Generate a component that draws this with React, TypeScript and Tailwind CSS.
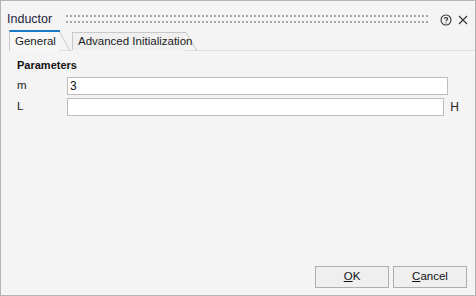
import type React from 'react';

const font = { fontFamily: '"Liberation Sans", Arial, sans-serif' };

const Grip: React.FC = () => (
  <svg width="364" height="9" className="shrink-0">
    <defs>
      <pattern id="grip" width="4" height="6" patternUnits="userSpaceOnUse">
        <rect x="0" y="0" width="2" height="2" fill="#a6a6a6" />
      </pattern>
    </defs>
    <rect x="0" y="0" width="364" height="9" fill="url(#grip)" />
  </svg>
);

const HelpIcon: React.FC = () => (
  <svg width="12" height="12" viewBox="0 0 12 12" fill="none" stroke="#333" strokeWidth="1.1">
    <circle cx="6" cy="6" r="5" />
    <path d="M4.3 4.8 C4.3 3.2 7.7 3.2 7.7 4.8 C7.7 6 6 6 6 7.2" />
    <circle cx="6" cy="8.9" r="0.6" fill="#333" stroke="none" />
  </svg>
);

const CloseIcon: React.FC = () => (
  <svg width="10" height="10" viewBox="0 0 10 10" stroke="#333" strokeWidth="1.1">
    <path d="M1 1 L9 9 M9 1 L1 9" />
  </svg>
);

const Tab: React.FC<{ label: string; active?: boolean; width: number }> = ({ label, active, width }) => (
  <div
    className={
      active
        ? 'relative z-10 flex h-[21px] items-center border-l border-t-2 border-l-[#c8c8c8] border-t-[#1a79c4] bg-[#f7f7f7] pl-[5px]'
        : 'relative mt-[2px] flex h-[18px] items-center border-l border-t border-[#c8c8c8] bg-[#f0f0f0] pl-[5px]'
    }
    style={{ width }}
  >
    <span className="relative z-10 whitespace-nowrap text-[11.5px] leading-none text-[#222]">{label}</span>
    <svg
      width="13"
      height={active ? 21 : 19}
      className={active ? 'absolute -right-[12px] -top-[2px]' : 'absolute -right-[13px] -top-[1px]'}
    >
      <path
        d={active ? 'M0 0.5 L1 0.5 L12 21' : 'M0 0.5 L1 0.5 L12 19'}
        fill={active ? '#f7f7f7' : '#f0f0f0'}
        stroke="#c8c8c8"
      />
      {active && <rect x="0" y="0" width="2" height="2" fill="#1a79c4" />}
    </svg>
  </div>
);

const FieldRow: React.FC<{ label: string; value?: string; unit?: string }> = ({ label, value, unit }) => (
  <div className="flex h-[21px] items-center">
    <span className="w-[50px] text-[11.5px] text-[#222]">{label}</span>
    <div className="flex h-[18px] w-[381px] items-center border border-[#bdbdbd] bg-white px-[2px] text-[12px] text-[#111]">
      {value}
    </div>
    <span className="ml-[6px] text-[12px] text-[#222]">{unit}</span>
  </div>
);

const Button: React.FC<{ children: React.ReactNode }> = ({ children }) => (
  <button className="flex h-[22px] w-[74px] items-center justify-center border border-[#adadad] bg-[#efefef] text-[11.5px] text-[#111]">
    {children}
  </button>
);

export default function App() {
  return (
    <div className="flex h-[296px] w-[476px] flex-col border border-[#b4b4b4] bg-[#f4f4f4]" style={font}>
      <div className="flex h-[29px] items-center pl-[6px] pt-[8px]">
        <span className="w-[59px] text-[12.5px] text-[#1e1e3c]">Inductor</span>
        <Grip />
        <div className="ml-[10px] flex items-center gap-[6px]">
          <HelpIcon />
          <CloseIcon />
        </div>
      </div>
      <div className="flex h-[21px] items-start pl-[8px]">
        <Tab label="General" active width={50} />
        <div className="w-[13px] self-end border-b border-[#dedede]" />
        <div className="flex flex-col">
          <Tab label="Advanced Initialization" width={113} />
        </div>
        <div className="flex-1 self-end border-b border-[#dedede]" />
      </div>
      <div className="flex flex-1 flex-col px-[16px] pt-[6px]">
        <div className="text-[11px] font-bold text-[#111]">Parameters</div>
        <div className="mt-[2px] flex flex-col">
          <FieldRow label="m" value="3" />
          <FieldRow label="L" unit="H" />
        </div>
        <div className="-mr-[8px] mb-[7px] mt-auto flex justify-end gap-[4px]">
          <Button>
            <span>
              <u>O</u>K
            </span>
          </Button>
          <Button>
            <span>
              <u>C</u>ancel
            </span>
          </Button>
        </div>
      </div>
    </div>
  );
}
